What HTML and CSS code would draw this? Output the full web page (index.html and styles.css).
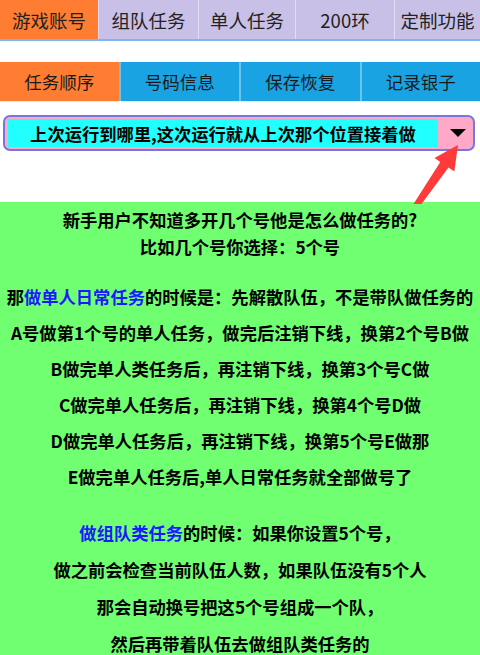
FILE: index.html
```html
<!DOCTYPE html>
<html lang="zh">
<head>
<meta charset="utf-8">
<link rel="stylesheet" href="styles.css">
</head>
<body>
<div class="page">
  <div class="tabs-main">
    <div class="tab t1 active">游戏账号</div>
    <div class="tab t2">组队任务</div>
    <div class="tab t3">单人任务</div>
    <div class="tab t4">200环</div>
    <div class="tab t5">定制功能</div>
  </div>
  <div class="tabs-sub">
    <div class="sub active">任务顺序</div>
    <div class="sub">号码信息</div>
    <div class="sub">保存恢复</div>
    <div class="sub">记录银子</div>
  </div>
  <div class="select">
    <div class="select-value">上次运行到哪里,这次运行就从上次那个位置接着做</div>
    <div class="select-btn"><span class="caret"></span></div>
  </div>
  <svg class="arrow" width="480" height="210" viewBox="0 0 480 210">
    <polygon points="458,145 454.3,171.6 448.5,167.6 421.5,204 413.5,204 440.3,162 434.5,158" fill="#ff3a3a"/>
  </svg>
  <div class="info">
    <div class="group g1">
      <div class="line">新手用户不知道多开几个号他是怎么做任务的?</div>
      <div class="line">比如几个号你选择：5个号</div>
    </div>
    <div class="group g2">
      <div class="line">那<span class="hl">做单人日常任务</span>的时候是：先解散队伍，不是带队做任务的</div>
      <div class="line">A号做第1个号的单人任务，做完后注销下线，换第2个号B做</div>
      <div class="line">B做完单人类任务后，再注销下线，换第3个号C做</div>
      <div class="line">C做完单人任务后，再注销下线，换第4个号D做</div>
      <div class="line">D做完单人任务后，再注销下线，换第5个号E做那</div>
      <div class="line">E做完单人任务后,单人日常任务就全部做号了</div>
    </div>
    <div class="group g3">
      <div class="line"><span class="hl">做组队类任务</span>的时候：如果你设置5个号，</div>
      <div class="line">做之前会检查当前队伍人数，如果队伍没有5个人</div>
      <div class="line">那会自动换号把这5个号组成一个队，</div>
      <div class="line">然后再带着队伍去做组队类任务的</div>
    </div>
  </div>
</div>
</body>
</html>
```
FILE: styles.css
```css
html, body {
  margin: 0;
  padding: 0;
  background: #ffffff;
}
.page {
  position: relative;
  width: 480px;
  height: 655px;
  overflow: hidden;
  font-family: "Noto Sans CJK SC", "Noto Sans", sans-serif;
}
.tabs-main {
  display: flex;
  height: 39px;
  border-bottom: 2px solid #82b2f2;
  background: #c8c0e6;
}
.tab {
  display: flex;
  align-items: center;
  justify-content: center;
  font-size: 18.5px;
  color: #222;
  background: #c8c0e6;
  border-left: 1px solid #e2dcf4;
  box-sizing: border-box;
  white-space: nowrap;
}
.tab.active {
  background: #ff7d32;
  border-left: none;
}
.t1 { width: 98px; }
.t2 { width: 100px; }
.t3 { width: 97px; }
.t4 { width: 99px; }
.t5 { flex: 1; }
.tabs-sub {
  display: flex;
  height: 39px;
  margin-top: 21px;
  border-bottom: 1px solid #ececec;
}
.sub {
  flex: 1;
  display: flex;
  align-items: center;
  justify-content: center;
  font-size: 17.5px;
  color: #1a1a1a;
  background: #1aa3e2;
  border-left: 2px solid #6cc4ee;
}
.sub.active {
  background: #ff7d32;
  border-left: none;
}
.select {
  display: flex;
  margin: 13px 5px 0 3px;
  height: 36px;
  box-sizing: border-box;
  border: 2px solid #7676e2;
  border-radius: 7px;
  background: #ffa8c8;
  padding: 2px 2px 2px 3px;
}
.select-value {
  width: 430px;
  background: #22ffff;
  display: flex;
  align-items: center;
  justify-content: center;
  font-size: 17.3px;
  font-weight: bold;
  color: #000;
  white-space: nowrap;
}
.select-btn {
  flex: 1;
  display: flex;
  align-items: center;
  justify-content: center;
  padding-left: 6px;
}
.caret {
  width: 0;
  height: 0;
  border-left: 8px solid transparent;
  border-right: 8px solid transparent;
  border-top: 8px solid #000;
}
.arrow {
  position: absolute;
  left: 0;
  top: 0;
  pointer-events: none;
}
.info {
  margin-top: 51px;
  height: 453px;
  background: #70ff70;
  padding-top: 7px;
  box-sizing: border-box;
  text-align: center;
  font-size: 17.3px;
  font-weight: bold;
  color: #000;
}
.group {
  display: flex;
  flex-direction: column;
  align-items: center;
}
.line {
  line-height: 22px;
  white-space: nowrap;
}
.g1 { row-gap: 5px; }
.g2 { row-gap: 14px; margin-top: 28px; }
.g3 { row-gap: 15px; margin-top: 34px; }
.hl {
  color: #1a1aff;
}
```
